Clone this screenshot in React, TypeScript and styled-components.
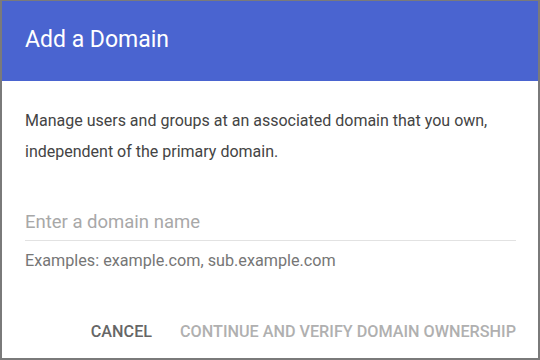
import React, { useState } from "react";
import styled, { createGlobalStyle } from "styled-components";

const GlobalStyle = createGlobalStyle`
  html, body {
    margin: 0;
    padding: 0;
    background: #ffffff;
  }
  body {
    font-family: Roboto, "Liberation Sans", Arial, sans-serif;
  }
  * {
    box-sizing: border-box;
  }
`;

const Dialog = styled.div`
  display: flex;
  flex-direction: column;
  width: 540px;
  height: 360px;
  background: #ffffff;
  border: 2px solid #7a7a7a;
  border-top-width: 1px;
`;

const Header = styled.header`
  display: flex;
  align-items: center;
  height: 80px;
  padding: 0 0 4px 23px;
  background: #4a64d0;
`;

const Title = styled.h1`
  margin: 0;
  color: #ffffff;
  font-size: 23px;
  font-weight: 400;
`;

const Body = styled.div`
  display: flex;
  flex-direction: column;
  flex: 1;
  padding: 24px 22px 0 23px;
`;

const Description = styled.p`
  margin: 0;
  color: #444444;
  font-size: 16px;
  line-height: 31px;
`;

const Field = styled.label`
  display: flex;
  flex-direction: column;
  margin-top: 37px;
`;

const Input = styled.input`
  width: 100%;
  height: 37px;
  padding: 0;
  border: none;
  border-bottom: 1px solid #e2e2e2;
  outline: none;
  background: transparent;
  color: #333333;
  font-family: inherit;
  font-size: 18.5px;

  &::placeholder {
    color: #a8a8a8;
  }
`;

const Helper = styled.span`
  margin-top: 10px;
  color: #767676;
  font-size: 16.2px;
`;

const Actions = styled.div`
  display: flex;
  justify-content: flex-end;
  align-items: center;
  gap: 28px;
  margin-top: auto;
  padding-bottom: 17px;
`;

const Button = styled.button<{ $disabled?: boolean }>`
  padding: 0;
  border: none;
  background: none;
  color: ${(props) => (props.$disabled ? "#b0b0b0" : "#666666")};
  font-family: inherit;
  font-size: 16.2px;
  font-weight: 500;
  text-transform: uppercase;
  cursor: ${(props) => (props.$disabled ? "default" : "pointer")};
`;

const App: React.FunctionComponent = () => {
  const [domain, setDomain] = useState("");

  return (
    <>
      <GlobalStyle />
      <Dialog>
        <Header>
          <Title>Add a Domain</Title>
        </Header>
        <Body>
          <Description>
            Manage users and groups at an associated domain that you own,
            <br />
            independent of the primary domain.
          </Description>
          <Field>
            <Input
              placeholder="Enter a domain name"
              value={domain}
              onChange={(e) => setDomain(e.target.value)}
            />
            <Helper>Examples: example.com, sub.example.com</Helper>
          </Field>
          <Actions>
            <Button>Cancel</Button>
            <Button $disabled={!domain}>Continue and verify domain ownership</Button>
          </Actions>
        </Body>
      </Dialog>
    </>
  );
};

export default App;
